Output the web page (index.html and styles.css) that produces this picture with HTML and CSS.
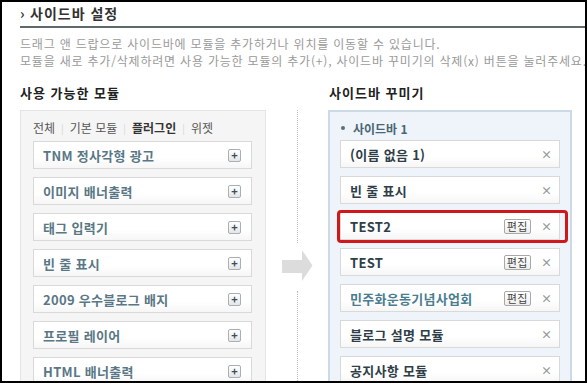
FILE: index.html
```html
<!DOCTYPE html>
<html lang="ko">
<head>
  <meta charset="UTF-8" />
  <title>사이드바 설정</title>
  <link rel="stylesheet" href="styles.css">
</head>
<body>
  <div class="frame">
    <h2 class="title"><span class="caret">›</span>사이드바 설정</h2>
    <p class="desc">드래그 앤 드랍으로 사이드바에 모듈을 추가하거나 위치를 이동할 수 있습니다.<br>모듈을 새로 추가/삭제하려면 사용 가능한 모듈의 추가(+), 사이드바 꾸미기의 삭제(x) 버튼을 눌러주세요.</p>

    <div class="columns">
      <section class="col">
        <h3 class="col-title">사용 가능한 모듈</h3>
        <div class="panel panel-available">
          <div class="tabs">
            <span>전체</span><span class="sep">|</span><span>기본 모듈</span><span class="sep">|</span><span class="on">플러그인</span><span class="sep">|</span><span>위젯</span>
          </div>
          <ul class="modules">
            <li class="module"><span class="name">TNM 정사각형 광고</span><span class="add">+</span></li>
            <li class="module"><span class="name">이미지 배너출력</span><span class="add">+</span></li>
            <li class="module"><span class="name">태그 입력기</span><span class="add">+</span></li>
            <li class="module"><span class="name">빈 줄 표시</span><span class="add">+</span></li>
            <li class="module"><span class="name">2009 우수블로그 배지</span><span class="add">+</span></li>
            <li class="module"><span class="name">프로필 레이어</span><span class="add">+</span></li>
            <li class="module"><span class="name">HTML 배너출력</span><span class="add">+</span></li>
          </ul>
        </div>
      </section>

      <div class="divider">
        <span class="dots dots-top"></span>
        <svg class="arrow" width="31" height="31" viewBox="0 0 31 31">
          <path d="M0 10 H20 V0 L30.5 15.5 L20 31 V23 H0 Z" fill="#dcdcdc"/>
        </svg>
        <span class="dots dots-bottom"></span>
      </div>

      <section class="col">
        <h3 class="col-title">사이드바 꾸미기</h3>
        <div class="panel panel-sidebar">
          <div class="sidebar-name"><span class="bullet"></span>사이드바 1</div>
          <ul class="modules">
            <li class="module used"><span class="name">(이름 없음 1)</span><span class="del">×</span></li>
            <li class="module used"><span class="name">빈 줄 표시</span><span class="del">×</span></li>
            <li class="module used marked"><span class="name">TEST2</span><span class="edit">편집</span><span class="del">×</span></li>
            <li class="module used"><span class="name">TEST</span><span class="edit">편집</span><span class="del">×</span></li>
            <li class="module used"><span class="name link">민주화운동기념사업회</span><span class="edit">편집</span><span class="del">×</span></li>
            <li class="module used"><span class="name">블로그 설명 모듈</span><span class="del">×</span></li>
            <li class="module used"><span class="name">공지사항 모듈</span><span class="del">×</span></li>
          </ul>
        </div>
      </section>
    </div>
  </div>
</body>
</html>
```

FILE: styles.css
```css
* {
  margin: 0; padding: 0; box-sizing: border-box;
}
body {
  font-family: "Noto Sans CJK KR", "Noto Sans", sans-serif;
  background: #fff;
  color: #333;
}
.frame {
  width: 587px;
  height: 383px;
  border: 2px solid #000;
  overflow: hidden;
  background: #fff;
}
.title {
  margin-left: 18px;
  height: 26px;
  padding-top: 1px;
  line-height: 20px;
  font-size: 14px;
  font-weight: bold;
  letter-spacing: 1px;
  color: #333;
  border-bottom: 2px solid #5f6968;
}
.caret {
  display: inline-block;
  width: 10px;
  font-size: 14px;
}
.desc {
  margin: 7px 0 0 18px;
  font-size: 12px;
  line-height: 17px;
  letter-spacing: 0.8px;
  color: #9a9a9a;
  white-space: nowrap;
  overflow: hidden;
}
.columns {
  display: grid;
  grid-template-columns: 246px 62px 244px;
  margin: 15px 0 0 18px;
}
.col-title {
  font-size: 13px;
  font-weight: bold;
  line-height: 18px;
  letter-spacing: 1px;
  color: #222;
  margin-bottom: 8px;
}
.col + .divider + .col .col-title {
  padding-left: 1px;
}
.panel {
  height: 400px;
}
.panel-available {
  background: #f5f5f5;
  border: 1px solid #e4e4e4;
  padding: 8px 0 0 12px;
}
.tabs {
  display: flex;
  align-items: center;
  height: 16px;
  font-size: 12px;
  color: #555;
  margin-bottom: 6px;
}
.tabs .sep {
  color: #d6d6d6;
  font-size: 10px;
  margin: 0 6px;
}
.tabs .on {
  font-weight: bold;
  color: #333;
}
.modules {
  list-style: none;
  display: flex;
  flex-direction: column;
  gap: 8px;
}
.module {
  position: relative;
  display: flex;
  align-items: center;
  width: 219px;
  height: 28px;
  padding: 0 10px 0 9px;
  background: linear-gradient(#fff, #fff 60%, #f6f6f6);
  border: 1px solid #d9d9d9;
}
.name {
  flex: 1;
  font-size: 13px;
  font-weight: bold;
  letter-spacing: 0.3px;
  color: #5a7785;
  white-space: nowrap;
}
.add {
  width: 13px;
  height: 13px;
  border: 1px solid #a9afb3;
  border-radius: 2px;
  background: linear-gradient(#fff, #e3e6e8);
  font-size: 11px;
  font-weight: bold;
  line-height: 10px;
  text-align: center;
  color: #3c4d57;
}
.divider {
  display: flex;
  flex-direction: column;
  align-items: center;
  margin-top: 26px;
}
.dots {
  width: 0;
  border-left: 1px dotted #bdbdbd;
}
.dots-top {
  height: 133px;
}
.arrow {
  margin: 7px 0 10px;
}
.dots-bottom {
  height: 120px;
}
.panel-sidebar {
  background: #eef4f9;
  border: 2px solid #cbdae4;
  padding: 8px 0 0 10px;
}
.sidebar-name {
  display: flex;
  align-items: center;
  height: 16px;
  font-size: 12px;
  font-weight: bold;
  color: #4a6674;
  margin-bottom: 4px;
}
.bullet {
  width: 4px;
  height: 4px;
  border-radius: 50%;
  background: #5a6e78;
  margin: 0 8px 0 1px;
}
.module.used {
  width: 220px;
}
.used .name {
  color: #2f3e47;
}
.used .name.link {
  color: #4a7d90;
}
.edit {
  height: 15px;
  padding: 0 2px;
  margin-right: 10px;
  border: 1px solid #a8a8a8;
  border-radius: 2px;
  background: linear-gradient(#fff, #eee);
  font-size: 11px;
  line-height: 13px;
  letter-spacing: 0.5px;
  color: #444;
}
.del {
  font-size: 11px;
  font-weight: bold;
  color: #999;
  width: 8px;
  text-align: center;
}
.marked::after {
  content: "";
  position: absolute;
  top: -3px;
  bottom: -4px;
  left: -4px;
  right: -9px;
  border: 3px solid #d0181c;
  border-radius: 4px;
}
```
